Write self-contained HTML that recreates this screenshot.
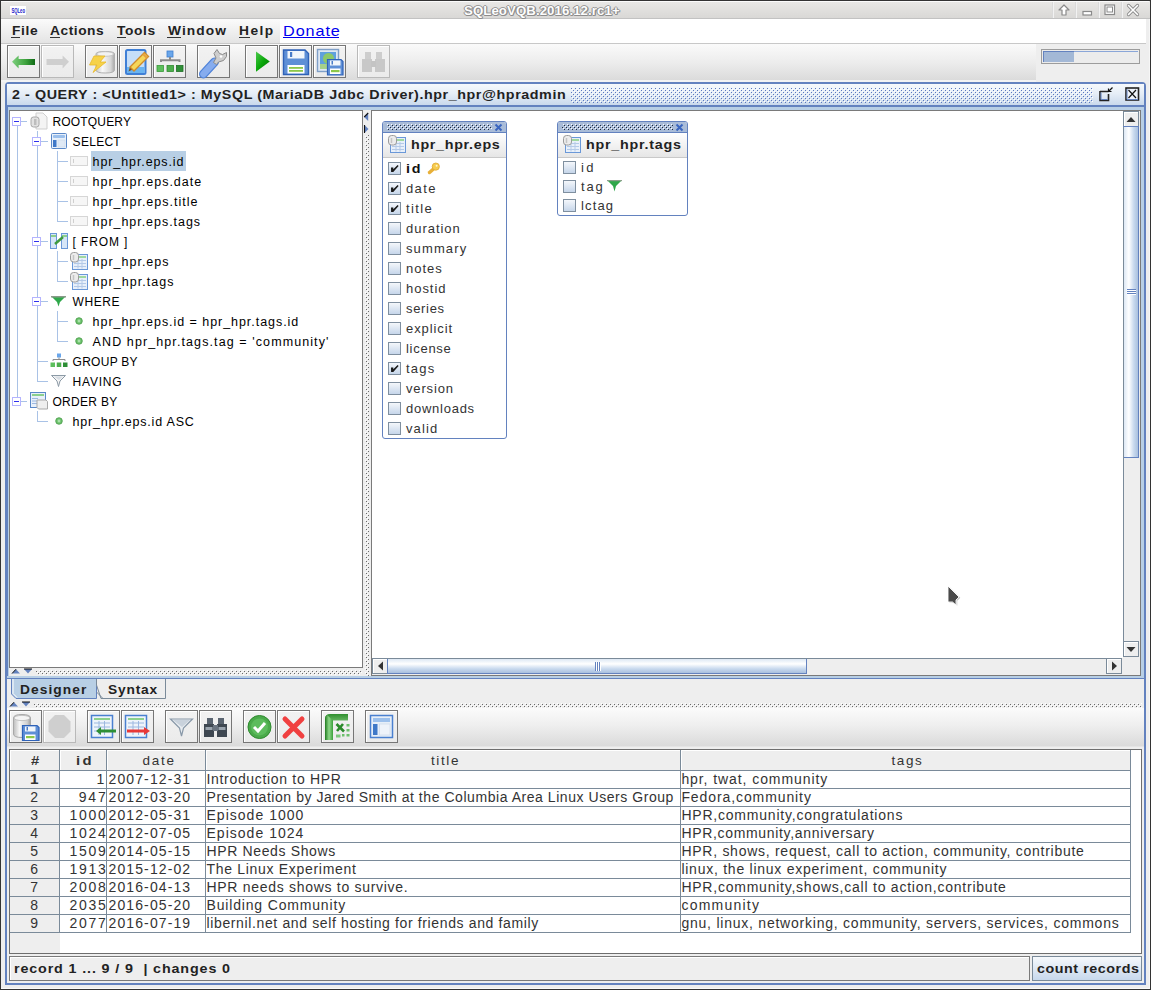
<!DOCTYPE html>
<html><head><meta charset="utf-8"><style>
html,body{margin:0;padding:0;}
body{width:1151px;height:990px;position:relative;overflow:hidden;background:#eeeeee;font-family:"Liberation Sans",sans-serif;}
.a{position:absolute;}
.t{position:absolute;white-space:pre;font-family:"Liberation Sans",sans-serif;}
svg{overflow:visible;}
</style></head><body>
<div class="a" style="left:0px;top:0px;width:1151px;height:990px;background:#eeeeee"></div>
<div class="a" style="left:0px;top:0px;width:1151px;height:19px;background:linear-gradient(#eae9e7,#d8d7d5);"></div>
<div class="a" style="left:1px;top:1px;width:1148px;height:1px;background:#fbfbfb"></div>
<div class="a" style="left:0px;top:18px;width:1151px;height:1px;background:#c2c2c2"></div>
<div class="a" style="left:10px;top:6px;width:16px;height:9px;background:#fff"></div>
<svg class="a" style="left:10px;top:6px" width="16" height="9" viewBox="0 0 16 9"><text x="1.5" y="7.3" font-family="Liberation Sans" font-size="7.5" font-weight="bold" fill="#1515c8" textLength="13.5" lengthAdjust="spacingAndGlyphs">SQLeo</text></svg>
<div class="t" style="left:463.5px;top:5px;font-size:12px;line-height:12px;letter-spacing:0.087px;color:#fdfdfd;transform:scaleX(1.100);transform-origin:0 0;font-weight:bold;text-shadow:1px 0 0 #8c8c8c,-1px 0 0 #8c8c8c,0 1px 0 #8c8c8c,0 -1px 0 #9c9c9c,1px 1px 0 #9a9a9a;">SQLeoVQB.2016.12.rc1+</div>
<div class="a" style="left:1052px;top:2px;width:1px;height:16px;background:#dadada"></div>
<div class="a" style="left:1053px;top:2px;width:1px;height:16px;background:#f2f2f2"></div>
<div class="a" style="left:1075px;top:2px;width:1px;height:16px;background:#dadada"></div>
<div class="a" style="left:1076px;top:2px;width:1px;height:16px;background:#f2f2f2"></div>
<div class="a" style="left:1098px;top:2px;width:1px;height:16px;background:#dadada"></div>
<div class="a" style="left:1099px;top:2px;width:1px;height:16px;background:#f2f2f2"></div>
<div class="a" style="left:1121px;top:2px;width:1px;height:16px;background:#dadada"></div>
<div class="a" style="left:1122px;top:2px;width:1px;height:16px;background:#f2f2f2"></div>
<svg class="a" style="left:1058px;top:4px" width="12" height="12" viewBox="0 0 12 12"><path d="M6 1 L11 6 L8 6 L8 11 L4 11 L4 6 L1 6 Z" fill="#fff" stroke="#8a8a8a" stroke-width="1.2" stroke-linejoin="round"/></svg>
<svg class="a" style="left:1082px;top:10px" width="11" height="7" viewBox="0 0 11 7"><rect x="1" y="1.5" width="8.5" height="3.5" fill="#fff" stroke="#8a8a8a" stroke-width="1.2"/></svg>
<svg class="a" style="left:1104px;top:4px" width="12" height="12" viewBox="0 0 12 12"><rect x="1" y="1" width="9.5" height="9.5" fill="#fff" stroke="#8a8a8a" stroke-width="1.2"/><rect x="3" y="3" width="5.5" height="5" fill="#fff" stroke="#8a8a8a" stroke-width="1"/></svg>
<svg class="a" style="left:1127px;top:4px" width="12" height="12" viewBox="0 0 12 12"><path d="M1.5 1.5 L10.5 10.5 M10.5 1.5 L1.5 10.5" stroke="#8a8a8a" stroke-width="3.2" stroke-linecap="round"/><path d="M1.5 1.5 L10.5 10.5 M10.5 1.5 L1.5 10.5" stroke="#fff" stroke-width="1.6" stroke-linecap="round"/></svg>
<div class="a" style="left:1px;top:19px;width:1149px;height:24px;background:#fff"></div>
<div class="a" style="left:1px;top:19px;width:279px;height:24px;background:linear-gradient(#fbfbfb,#e4e4e4)"></div>
<div class="a" style="left:1px;top:43px;width:1149px;height:1px;background:#c8c8c8"></div>
<div class="t" style="left:11.5px;top:25px;font-size:12.5px;line-height:12.5px;letter-spacing:0.561px;color:#222;transform:scaleX(1.100);transform-origin:0 0;font-weight:bold;">File</div>
<div class="a" style="left:11px;top:37px;width:9px;height:1px;background:#333"></div>
<div class="t" style="left:50.4px;top:25px;font-size:12.5px;line-height:12.5px;letter-spacing:0.491px;color:#222;transform:scaleX(1.100);transform-origin:0 0;font-weight:bold;">Actions</div>
<div class="a" style="left:50px;top:37px;width:10px;height:1px;background:#333"></div>
<div class="t" style="left:117.1px;top:25px;font-size:12.5px;line-height:12.5px;letter-spacing:0.565px;color:#222;transform:scaleX(1.100);transform-origin:0 0;font-weight:bold;">Tools</div>
<div class="a" style="left:117px;top:37px;width:9px;height:1px;background:#333"></div>
<div class="t" style="left:167.8px;top:25px;font-size:12.5px;line-height:12.5px;letter-spacing:0.970px;color:#222;transform:scaleX(1.100);transform-origin:0 0;font-weight:bold;">Window</div>
<div class="a" style="left:167px;top:37px;width:14px;height:1px;background:#333"></div>
<div class="t" style="left:239.0px;top:25px;font-size:12.5px;line-height:12.5px;letter-spacing:1.322px;color:#222;transform:scaleX(1.100);transform-origin:0 0;font-weight:bold;">Help</div>
<div class="a" style="left:239px;top:37px;width:11px;height:1px;background:#333"></div>
<div class="t" style="left:283.4px;top:23px;font-size:15px;line-height:15px;letter-spacing:0.859px;color:#0000ee;transform:scaleX(1.080);transform-origin:0 0;">Donate</div>
<div class="a" style="left:283px;top:37px;width:56px;height:1px;background:#0000ee"></div>
<div class="a" style="left:1px;top:44px;width:1149px;height:38px;background:linear-gradient(#fafafa 0%,#ececec 50%,#d9d9d9 100%)"></div>
<div class="a" style="left:1px;top:80px;width:1149px;height:2px;background:#f3f3f3"></div>
<div class="a" style="left:1036px;top:44px;width:113px;height:38px;background:#eeeeee"></div>
<div class="a" style="left:1041px;top:49px;width:99px;height:15px;border:1px solid #9c9c9c;box-sizing:border-box;background:#ececec"></div>
<div class="a" style="left:1043px;top:51px;width:31px;height:11px;background:#a3b8d6"></div>
<div class="a" style="left:1043px;top:51px;width:95px;height:1px;background:#8aa6d8"></div>
<div class="a" style="left:1043px;top:51px;width:1px;height:11px;background:#6382bf"></div>
<div class="a" style="left:1043px;top:51px;width:31px;height:1px;background:#6382bf"></div>
<div class="a" style="left:1146px;top:19px;width:4px;height:63px;background:#eeeeee"></div>
<div class="a" style="left:7px;top:45px;width:33px;height:33px;border:1px solid #767676;box-sizing:border-box;background:linear-gradient(#f2f2f2,#ebebeb);box-shadow:inset 1px 1px 0 #fff"></div>
<svg class="a" style="left:7px;top:45px" width="33" height="33" viewBox="0 0 33 33"><defs><linearGradient id="gback" x1="0" x2="1"><stop offset="0" stop-color="#7fd07f"/><stop offset="0.6" stop-color="#3da23d"/><stop offset="1" stop-color="#0f6a16"/></linearGradient></defs><path d="M5 16.8 L11.6 10.6 L11.6 14 L28 14 L28 20 L11.6 20 L11.6 23.5 Z" fill="url(#gback)"/></svg>
<div class="a" style="left:41px;top:45px;width:33px;height:33px;border:1px solid #b9b9b9;box-sizing:border-box;background:linear-gradient(#f2f2f2,#ebebeb);box-shadow:inset 1px 1px 0 #fff"></div>
<svg class="a" style="left:41px;top:45px" width="33" height="33" viewBox="0 0 33 33"><defs></defs><path d="M28 16.8 L21.6 10.6 L21.6 14 L5.5 14 L5.5 20 L21.6 20 L21.6 23.5 Z" fill="#cfcfcf"/></svg>
<div class="a" style="left:85px;top:45px;width:33px;height:33px;border:1px solid #767676;box-sizing:border-box;background:linear-gradient(#f2f2f2,#ebebeb);box-shadow:inset 1px 1px 0 #fff"></div>
<svg class="a" style="left:85px;top:45px" width="33" height="33" viewBox="0 0 33 33"><defs></defs><defs><linearGradient id="gcyl" x1="0" x2="1"><stop offset="0" stop-color="#c8c8c8"/><stop offset="0.35" stop-color="#f8f8f8"/><stop offset="0.8" stop-color="#d6d6d6"/><stop offset="1" stop-color="#a8a8a8"/></linearGradient></defs><path d="M11 9 Q11 6.5 20.2 6.5 Q29.5 6.5 29.5 9 L29.5 25 Q29.5 28 20.2 28 Q11 28 11 25 Z" fill="url(#gcyl)" stroke="#b0b0b0" stroke-width="1"/><ellipse cx="20.2" cy="9" rx="8.5" ry="2.3" fill="#f2f2f2" stroke="#bcbcbc" stroke-width="0.8"/><path d="M9 11 L20 11 L15 17 L21 17 L8 27.5 L12 20 L4.5 20 Z" fill="#f6d24a" stroke="#e9b92a" stroke-width="0.8"/></svg>
<div class="a" style="left:119px;top:45px;width:33px;height:33px;border:1px solid #767676;box-sizing:border-box;background:linear-gradient(#f2f2f2,#ebebeb);box-shadow:inset 1px 1px 0 #fff"></div>
<svg class="a" style="left:119px;top:45px" width="33" height="33" viewBox="0 0 33 33"><defs></defs><rect x="7" y="5" width="19.5" height="24" rx="1.5" fill="#c6def8" stroke="#3f7fd6" stroke-width="2"/><rect x="8" y="22" width="17.5" height="6" fill="#6ab4f0"/><path d="M9.5 26.5 L11 22 L13.5 24.5 Z" fill="#7a5020"/><path d="M11 22 L25.5 7.5 L29.5 11.5 L15 26 Z" fill="#f6d65a" stroke="#d08a2a" stroke-width="1.4"/><path d="M24 9 L28 13" stroke="#e8a040" stroke-width="2"/></svg>
<div class="a" style="left:153px;top:45px;width:33px;height:33px;border:1px solid #767676;box-sizing:border-box;background:linear-gradient(#f2f2f2,#ebebeb);box-shadow:inset 1px 1px 0 #fff"></div>
<svg class="a" style="left:153px;top:45px" width="33" height="33" viewBox="0 0 33 33"><defs></defs><rect x="14" y="6" width="6" height="6" fill="#6aa6ea" stroke="#3f7fd0" stroke-width="0.8"/><path d="M8 17 L8 15.2 L26.5 15.2 L26.5 17" fill="none" stroke="#8c8c8c" stroke-width="2"/><rect x="16" y="12" width="2" height="3" fill="#8c8c8c"/><rect x="4" y="20.5" width="6.5" height="6" fill="#5cbf5c" stroke="#3a9a3a" stroke-width="0.8"/><rect x="14" y="20.5" width="6.5" height="6" fill="#4cae4c" stroke="#2f8a2f" stroke-width="0.8"/><rect x="23.5" y="20.5" width="6.5" height="6" fill="#2e8f36" stroke="#1f6f26" stroke-width="0.8"/></svg>
<div class="a" style="left:197px;top:45px;width:33px;height:33px;border:1px solid #767676;box-sizing:border-box;background:linear-gradient(#f2f2f2,#ebebeb);box-shadow:inset 1px 1px 0 #fff"></div>
<svg class="a" style="left:197px;top:45px" width="33" height="33" viewBox="0 0 33 33"><defs></defs><path d="M6.5 29 L17.5 17" stroke="#4f82d8" stroke-width="9" stroke-linecap="round"/><path d="M6.5 29 L17.5 17" stroke="#86acee" stroke-width="6.5" stroke-linecap="round"/><path d="M16.5 17.5 L19 13 L17 8.5 L20 4.5 L22.5 8.5 L25.5 9.5 L29.5 7.5 L29.5 11.5 L26.5 15.5 L21.5 17 L19.5 19.5 Z" fill="#cdcdcd" stroke="#8a8a8a" stroke-width="1"/><circle cx="24" cy="11.5" r="1.3" fill="#fff"/></svg>
<div class="a" style="left:245px;top:45px;width:33px;height:33px;border:1px solid #767676;box-sizing:border-box;background:linear-gradient(#f2f2f2,#ebebeb);box-shadow:inset 1px 1px 0 #fff"></div>
<svg class="a" style="left:245px;top:45px" width="33" height="33" viewBox="0 0 33 33"><defs><linearGradient id="gplay" x1="0" y1="0" x2="1" y2="1"><stop offset="0" stop-color="#4cc84c"/><stop offset="0.5" stop-color="#0aa80a"/><stop offset="1" stop-color="#056e05"/></linearGradient></defs><path d="M11 6.4 L24.8 16.6 L11 26.8 Z" fill="url(#gplay)"/></svg>
<div class="a" style="left:279px;top:45px;width:33px;height:33px;border:1px solid #767676;box-sizing:border-box;background:linear-gradient(#f2f2f2,#ebebeb);box-shadow:inset 1px 1px 0 #fff"></div>
<svg class="a" style="left:279px;top:45px" width="33" height="33" viewBox="0 0 33 33"><defs></defs><path d="M4.5 5 L26 5 L29.5 8.5 L29.5 29.5 L4.5 29.5 Z" fill="#5e8fd6" stroke="#2f62b8" stroke-width="1.4"/><rect x="8.5" y="6" width="17" height="7.5" fill="#f2f6fb"/><rect x="11" y="7" width="2.2" height="5" fill="#4a7cc8"/><rect x="8.5" y="20" width="17" height="8.5" fill="#fff"/><rect x="10" y="22" width="14" height="1.8" fill="#8cc84a"/><rect x="10" y="25" width="14" height="1.8" fill="#8cc84a"/></svg>
<div class="a" style="left:313px;top:45px;width:33px;height:33px;border:1px solid #767676;box-sizing:border-box;background:linear-gradient(#f2f2f2,#ebebeb);box-shadow:inset 1px 1px 0 #fff"></div>
<svg class="a" style="left:313px;top:45px" width="33" height="33" viewBox="0 0 33 33"><defs></defs><rect x="4.5" y="4.5" width="21" height="22" fill="#dfe8f3" stroke="#7f9fc8" stroke-width="1.4"/><rect x="7" y="7" width="16" height="17" fill="#5fa0de"/><circle cx="15.5" cy="13.5" r="5.5" fill="#8cc86a"/><rect x="7" y="19" width="16" height="5" fill="#a6d08a"/><path d="M14.5 14.5 L28 14.5 L30 16.5 L30 30 L14.5 30 Z" fill="#5e8fd6" stroke="#2f62b8" stroke-width="1.2"/><rect x="17" y="15.5" width="10.5" height="5" fill="#f2f6fb"/><rect x="18.5" y="16" width="1.5" height="3.5" fill="#4a7cc8"/><rect x="17" y="23.5" width="10.5" height="5.5" fill="#fff"/><rect x="18" y="25" width="8.5" height="2.2" fill="#8cc84a"/></svg>
<div class="a" style="left:357px;top:45px;width:33px;height:33px;border:1px solid #b9b9b9;box-sizing:border-box;background:linear-gradient(#f2f2f2,#ebebeb);box-shadow:inset 1px 1px 0 #fff"></div>
<svg class="a" style="left:357px;top:45px" width="33" height="33" viewBox="0 0 33 33"><defs></defs><rect x="8" y="7" width="6" height="8" fill="#cdcdcd"/><rect x="19" y="7" width="6" height="8" fill="#cdcdcd"/><rect x="5" y="14" width="10" height="13" fill="#c8c8c8"/><rect x="18" y="14" width="10" height="13" fill="#c8c8c8"/><rect x="14" y="16" width="5" height="6" fill="#c4c4c4"/></svg>
<div class="a" style="left:5px;top:82px;width:1141px;height:903px;border:2px solid #6382bf;border-radius:4px 4px 0 0;box-sizing:border-box;background:#eeeeee"></div>
<div class="a" style="left:7px;top:84px;width:1137px;height:21px;background:linear-gradient(#f6f9fc 0%,#e6eef7 45%,#c9d9ec 100%)"></div>
<div class="a" style="left:7px;top:105px;width:1137px;height:2px;background:#6382bf"></div>
<div class="t" style="left:11.8px;top:88px;font-size:13px;line-height:13px;letter-spacing:0.519px;color:#222;transform:scaleX(1.100);transform-origin:0 0;font-weight:bold;">2 - QUERY : &lt;Untitled1&gt; : MySQL (MariaDB Jdbc Driver).hpr_hpr@hpradmin</div>
<svg class="a" style="left:0;top:0" width="1151" height="990"><defs><pattern id="bp1" width="4" height="4" patternUnits="userSpaceOnUse"><rect x="3" y="0" width="1" height="1" fill="#5a78c0"/><rect x="1" y="2" width="1" height="1" fill="#5a78c0"/><rect x="0" y="1" width="1" height="1" fill="#ffffff"/><rect x="2" y="3" width="1" height="1" fill="#ffffff"/></pattern></defs><rect x="571" y="88" width="522" height="15" fill="url(#bp1)"/></svg>
<svg class="a" style="left:1094px;top:84px" width="50" height="20" viewBox="0 0 50 20"><path d="M6 7.5 L14.5 7.5 M6 7 L6 16.5 L14.5 16.5 L14.5 10" fill="none" stroke="#222" stroke-width="1.6"/><path d="M7 8.5 L7 15.5 L13.5 15.5" fill="none" stroke="#6382bf" stroke-width="1"/><path d="M18.5 3.5 L14.5 7.5 M14.5 4.5 L14.5 7.5 L17.5 7.5" fill="none" stroke="#111" stroke-width="1.2"/><rect x="32" y="4" width="12.5" height="12" fill="#eef3fa" stroke="#222" stroke-width="1.6"/><path d="M33 15.5 L33 5 M33 15.5 L44 15.5" stroke="#6382bf" stroke-width="1"/><path d="M34.5 6 L42 14 M42 6 L34.5 14" stroke="#111" stroke-width="1.2"/></svg>
<div class="a" style="left:7px;top:107px;width:1137px;height:3px;background:#b8cfe5"></div>
<div class="a" style="left:7px;top:107px;width:2px;height:571px;background:#b8cfe5"></div>
<div class="a" style="left:7px;top:107px;width:1px;height:572px;background:#6382bf"></div>
<div class="a" style="left:1141px;top:107px;width:3px;height:571px;background:#b8cfe5"></div>
<div class="a" style="left:7px;top:676px;width:1137px;height:2px;background:#b8cfe5"></div>
<div class="a" style="left:7px;top:678px;width:1137px;height:1px;background:#6382bf"></div>
<div class="a" style="left:9px;top:110px;width:1132px;height:566px;background:#eeeeee"></div>
<div class="a" style="left:9px;top:110px;width:354px;height:558px;border:1px solid #7a7a7a;box-sizing:border-box;background:#fff"></div>
<div class="a" style="left:371px;top:110px;width:770px;height:566px;border:1px solid #7a7a7a;box-sizing:border-box;background:#fff"></div>
<svg class="a" style="left:0;top:0" width="1151" height="990"><defs><pattern id="bp2" width="4" height="4" patternUnits="userSpaceOnUse"><rect x="2" y="1" width="1" height="1" fill="#6a6a6a"/><rect x="0" y="3" width="1" height="1" fill="#6a6a6a"/><rect x="3" y="2" width="1" height="1" fill="#ffffff"/><rect x="1" y="0" width="1" height="1" fill="#ffffff"/></pattern></defs><rect x="365" y="135" width="4" height="541" fill="url(#bp2)"/></svg>
<svg class="a" style="left:0;top:0" width="1151" height="990"><defs><pattern id="bp3" width="4" height="4" patternUnits="userSpaceOnUse"><rect x="0" y="3" width="1" height="1" fill="#6a6a6a"/><rect x="2" y="1" width="1" height="1" fill="#6a6a6a"/><rect x="1" y="0" width="1" height="1" fill="#ffffff"/><rect x="3" y="2" width="1" height="1" fill="#ffffff"/></pattern></defs><rect x="36" y="670" width="326" height="5" fill="url(#bp3)"/></svg>
<div class="a" style="left:17px;top:126px;width:1px;height:271px;background:#a9c2e6"></div>
<div class="a" style="left:37px;top:131px;width:1px;height:251px;background:#a9c2e6"></div>
<div class="a" style="left:57px;top:151px;width:1px;height:71px;background:#a9c2e6"></div>
<div class="a" style="left:57px;top:251px;width:1px;height:31px;background:#a9c2e6"></div>
<div class="a" style="left:57px;top:311px;width:1px;height:31px;background:#a9c2e6"></div>
<div class="a" style="left:37px;top:411px;width:1px;height:11px;background:#a9c2e6"></div>
<div class="a" style="left:21px;top:121px;width:6px;height:1px;background:#a9c2e6"></div>
<div class="a" style="left:21px;top:401px;width:6px;height:1px;background:#a9c2e6"></div>
<div class="a" style="left:41px;top:141px;width:7px;height:1px;background:#a9c2e6"></div>
<div class="a" style="left:41px;top:241px;width:7px;height:1px;background:#a9c2e6"></div>
<div class="a" style="left:41px;top:301px;width:7px;height:1px;background:#a9c2e6"></div>
<div class="a" style="left:37px;top:361px;width:11px;height:1px;background:#a9c2e6"></div>
<div class="a" style="left:37px;top:381px;width:11px;height:1px;background:#a9c2e6"></div>
<div class="a" style="left:37px;top:421px;width:11px;height:1px;background:#a9c2e6"></div>
<div class="a" style="left:57px;top:161px;width:11px;height:1px;background:#a9c2e6"></div>
<div class="a" style="left:57px;top:181px;width:11px;height:1px;background:#a9c2e6"></div>
<div class="a" style="left:57px;top:201px;width:11px;height:1px;background:#a9c2e6"></div>
<div class="a" style="left:57px;top:221px;width:11px;height:1px;background:#a9c2e6"></div>
<div class="a" style="left:57px;top:261px;width:11px;height:1px;background:#a9c2e6"></div>
<div class="a" style="left:57px;top:281px;width:11px;height:1px;background:#a9c2e6"></div>
<div class="a" style="left:57px;top:321px;width:11px;height:1px;background:#a9c2e6"></div>
<div class="a" style="left:57px;top:341px;width:11px;height:1px;background:#a9c2e6"></div>
<div class="a" style="left:12px;top:117px;width:9px;height:9px;border:1px solid #b4b4ff;box-sizing:border-box;background:#fff"></div>
<div class="a" style="left:14px;top:121px;width:5px;height:1px;background:#3030f0"></div>
<div class="a" style="left:12px;top:397px;width:9px;height:9px;border:1px solid #b4b4ff;box-sizing:border-box;background:#fff"></div>
<div class="a" style="left:14px;top:401px;width:5px;height:1px;background:#3030f0"></div>
<div class="a" style="left:32px;top:137px;width:9px;height:9px;border:1px solid #b4b4ff;box-sizing:border-box;background:#fff"></div>
<div class="a" style="left:34px;top:141px;width:5px;height:1px;background:#3030f0"></div>
<div class="a" style="left:32px;top:237px;width:9px;height:9px;border:1px solid #b4b4ff;box-sizing:border-box;background:#fff"></div>
<div class="a" style="left:34px;top:241px;width:5px;height:1px;background:#3030f0"></div>
<div class="a" style="left:32px;top:297px;width:9px;height:9px;border:1px solid #b4b4ff;box-sizing:border-box;background:#fff"></div>
<div class="a" style="left:34px;top:301px;width:5px;height:1px;background:#3030f0"></div>
<svg class="a" style="left:30px;top:112px" width="18" height="18" viewBox="0 0 18 18"><path d="M6 1 L13 1 L17 5 L17 17 L6 17 Z" fill="#f4f4f4" stroke="#cfcfcf" stroke-width="1"/><rect x="1" y="5" width="8" height="10" rx="2.5" fill="#e2e2e2" stroke="#a8a8a8" stroke-width="1"/><rect x="4" y="7" width="2.5" height="6" fill="#bdbdbd"/></svg>
<svg class="a" style="left:51px;top:133px" width="16" height="16" viewBox="0 0 16 16"><rect x="0.5" y="0.5" width="15" height="15" rx="1" fill="#e8f0fa" stroke="#5a88c8" stroke-width="1"/><rect x="2" y="2" width="12" height="3" rx="1" fill="#9cc0ec"/><rect x="2" y="7" width="3.5" height="7" fill="#3f78c8"/><rect x="7" y="7" width="7" height="7" fill="#dfe9f5" stroke="#c8d6e8" stroke-width="0.5"/></svg>
<svg class="a" style="left:70px;top:156px" width="18" height="10" viewBox="0 0 18 10"><rect x="0.5" y="0.5" width="17" height="9" fill="#f6f6f6" stroke="#d6d6d6" stroke-width="1"/><rect x="3" y="3" width="1" height="4" fill="#cfcfcf"/></svg>
<svg class="a" style="left:70px;top:176px" width="18" height="10" viewBox="0 0 18 10"><rect x="0.5" y="0.5" width="17" height="9" fill="#f6f6f6" stroke="#d6d6d6" stroke-width="1"/><rect x="3" y="3" width="1" height="4" fill="#cfcfcf"/></svg>
<svg class="a" style="left:70px;top:196px" width="18" height="10" viewBox="0 0 18 10"><rect x="0.5" y="0.5" width="17" height="9" fill="#f6f6f6" stroke="#d6d6d6" stroke-width="1"/><rect x="3" y="3" width="1" height="4" fill="#cfcfcf"/></svg>
<svg class="a" style="left:70px;top:216px" width="18" height="10" viewBox="0 0 18 10"><rect x="0.5" y="0.5" width="17" height="9" fill="#f6f6f6" stroke="#d6d6d6" stroke-width="1"/><rect x="3" y="3" width="1" height="4" fill="#cfcfcf"/></svg>
<div class="a" style="left:91px;top:151px;width:95px;height:20px;background:#b8cfe5"></div>
<svg class="a" style="left:50px;top:233px" width="18" height="16" viewBox="0 0 18 16"><rect x="0.5" y="0.5" width="6" height="15" fill="#d6e6f8" stroke="#6a98d8" stroke-width="1"/><rect x="1" y="2" width="5" height="2" fill="#8cd08c"/><rect x="11.5" y="0.5" width="6" height="15" fill="#d6e6f8" stroke="#6a98d8" stroke-width="1"/><rect x="12" y="2" width="5" height="2" fill="#8cd08c"/><path d="M5 11 L13 4" stroke="#3f9a3f" stroke-width="2.5"/></svg>
<svg class="a" style="left:70px;top:252px" width="18" height="18" viewBox="0 0 18 18"><rect x="2.5" y="2.5" width="15" height="15" fill="#e8f0fa" stroke="#6a98d8" stroke-width="1"/><rect x="4" y="4" width="12" height="2" fill="#9fd89f"/><path d="M4 8.5 H16 M4 11.5 H16 M4 14.5 H16 M8 7 V16.5 M12 7 V16.5" stroke="#b4cae8" stroke-width="1"/><rect x="0.5" y="0.5" width="8" height="9.5" rx="3" fill="#ececec" stroke="#9a9a9a" stroke-width="1"/><path d="M3.5 3 V8" stroke="#c4c4c4" stroke-width="1.5"/></svg>
<svg class="a" style="left:70px;top:272px" width="18" height="18" viewBox="0 0 18 18"><rect x="2.5" y="2.5" width="15" height="15" fill="#e8f0fa" stroke="#6a98d8" stroke-width="1"/><rect x="4" y="4" width="12" height="2" fill="#9fd89f"/><path d="M4 8.5 H16 M4 11.5 H16 M4 14.5 H16 M8 7 V16.5 M12 7 V16.5" stroke="#b4cae8" stroke-width="1"/><rect x="0.5" y="0.5" width="8" height="9.5" rx="3" fill="#ececec" stroke="#9a9a9a" stroke-width="1"/><path d="M3.5 3 V8" stroke="#c4c4c4" stroke-width="1.5"/></svg>
<svg class="a" style="left:51px;top:296px" width="15" height="11" viewBox="0 0 15 11"><path d="M0.5 0.5 L14.5 0.5 L9 6 L7.5 10.5 L6 6 Z" fill="#2fa84a"/><rect x="0" y="0" width="15" height="1.5" fill="#8a9a8a"/></svg>
<svg class="a" style="left:75px;top:317px" width="8" height="8" viewBox="0 0 8 8"><circle cx="4" cy="4" r="3.3" fill="#6cc26c" stroke="#4a9a4a" stroke-width="0.8"/><circle cx="4" cy="4" r="1.4" fill="#a8e0a8"/></svg>
<svg class="a" style="left:75px;top:337px" width="8" height="8" viewBox="0 0 8 8"><circle cx="4" cy="4" r="3.3" fill="#6cc26c" stroke="#4a9a4a" stroke-width="0.8"/><circle cx="4" cy="4" r="1.4" fill="#a8e0a8"/></svg>
<svg class="a" style="left:55px;top:417px" width="8" height="8" viewBox="0 0 8 8"><circle cx="4" cy="4" r="3.3" fill="#6cc26c" stroke="#4a9a4a" stroke-width="0.8"/><circle cx="4" cy="4" r="1.4" fill="#a8e0a8"/></svg>
<svg class="a" style="left:50px;top:353px" width="18" height="15" viewBox="0 0 18 15"><rect x="7" y="0.5" width="4" height="4" fill="#6aa6ea"/><path d="M3 8 V6.5 H15 V8" fill="none" stroke="#8c8c8c" stroke-width="1"/><rect x="8.5" y="4.5" width="1" height="2" fill="#8c8c8c"/><rect x="0.5" y="9.5" width="4.5" height="4.5" fill="#5cbf5c"/><rect x="6.75" y="9.5" width="4.5" height="4.5" fill="#4cae4c"/><rect x="13" y="9.5" width="4.5" height="4.5" fill="#2e8f36"/></svg>
<svg class="a" style="left:51px;top:375px" width="15" height="12" viewBox="0 0 15 12"><path d="M0.5 0.5 L14.5 0.5 L9 6 L7.5 11.5 L6 6 Z" fill="#f4f4f4" stroke="#8c9aa6" stroke-width="1"/><path d="M3 1.5 L12 1.5 L8 5 Z" fill="#d8dee4"/></svg>
<svg class="a" style="left:30px;top:392px" width="18" height="18" viewBox="0 0 18 18"><rect x="0.5" y="0.5" width="15" height="15" fill="#e8f0fa" stroke="#5a88c8" stroke-width="1"/><rect x="2" y="2" width="12" height="2" fill="#8cd08c"/><path d="M2 6.5 H8 M2 9 H8 M2 11.5 H8" stroke="#9cb8e0" stroke-width="1"/><path d="M7 8 L16 8 L17.5 9.5 L17.5 17 L8.5 17 L7 15.5 Z" fill="#eeeeee" stroke="#a8a8a8" stroke-width="1"/></svg>
<div class="t" style="left:52.4px;top:116px;font-size:12px;line-height:12px;letter-spacing:0.180px;color:#000;">ROOTQUERY</div>
<div class="t" style="left:72.6px;top:136px;font-size:12px;line-height:12px;letter-spacing:0.284px;color:#000;">SELECT</div>
<div class="t" style="left:92.6px;top:156px;font-size:12.5px;line-height:12.5px;letter-spacing:0.896px;color:#000;">hpr_hpr.eps.id</div>
<div class="t" style="left:92.6px;top:176px;font-size:12.5px;line-height:12.5px;letter-spacing:0.982px;color:#000;">hpr_hpr.eps.date</div>
<div class="t" style="left:92.6px;top:196px;font-size:12.5px;line-height:12.5px;letter-spacing:0.988px;color:#000;">hpr_hpr.eps.title</div>
<div class="t" style="left:92.6px;top:216px;font-size:12.5px;line-height:12.5px;letter-spacing:0.957px;color:#000;">hpr_hpr.eps.tags</div>
<div class="t" style="left:72.6px;top:236px;font-size:12px;line-height:12px;letter-spacing:0.875px;color:#000;">[ FROM ]</div>
<div class="t" style="left:92.6px;top:256px;font-size:12.5px;line-height:12.5px;letter-spacing:0.988px;color:#000;">hpr_hpr.eps</div>
<div class="t" style="left:92.6px;top:276px;font-size:12.5px;line-height:12.5px;letter-spacing:1.032px;color:#000;">hpr_hpr.tags</div>
<div class="t" style="left:72.6px;top:296px;font-size:12px;line-height:12px;letter-spacing:0.573px;color:#000;">WHERE</div>
<div class="t" style="left:92.6px;top:316px;font-size:12.5px;line-height:12.5px;letter-spacing:0.951px;color:#000;">hpr_hpr.eps.id = hpr_hpr.tags.id</div>
<div class="t" style="left:92.6px;top:336px;font-size:12.5px;line-height:12.5px;letter-spacing:1.096px;color:#000;">AND hpr_hpr.tags.tag = 'community'</div>
<div class="t" style="left:72.6px;top:356px;font-size:12px;line-height:12px;letter-spacing:0.265px;color:#000;">GROUP BY</div>
<div class="t" style="left:72.6px;top:376px;font-size:12px;line-height:12px;letter-spacing:0.783px;color:#000;">HAVING</div>
<div class="t" style="left:52.4px;top:396px;font-size:12px;line-height:12px;letter-spacing:0.316px;color:#000;">ORDER BY</div>
<div class="t" style="left:72.6px;top:416px;font-size:12.5px;line-height:12.5px;letter-spacing:0.794px;color:#000;">hpr_hpr.eps.id ASC</div>
<svg class="a" style="left:363px;top:112px" width="7" height="22" viewBox="0 0 7 22"><path d="M5.2 1 L1.2 5 L5.2 9 Z" fill="#6382bf"/><path d="M5.2 1 L1.2 5" stroke="#111" stroke-width="1.1"/><path d="M1.5 13 L5.5 17 L1.5 21 Z" fill="#6382bf"/><path d="M1.5 13 L1.5 21" stroke="#111" stroke-width="1.1"/></svg>
<svg class="a" style="left:11px;top:668px" width="24" height="7" viewBox="0 0 24 7"><path d="M1 5.5 L5 1.2 L9 5.5 Z" fill="#6382bf"/><path d="M1 5.5 L5 1.2" stroke="#111" stroke-width="1"/><path d="M13 1 L21 1 L17 5.5 Z" fill="#6382bf"/><path d="M13 1 L21 1" stroke="#111" stroke-width="1"/></svg>
<svg class="a" style="left:9px;top:701px" width="24" height="7" viewBox="0 0 24 7"><path d="M1 5.5 L5 1.2 L9 5.5 Z" fill="#6382bf"/><path d="M1 5.5 L5 1.2" stroke="#111" stroke-width="1"/><path d="M13 1 L21 1 L17 5.5 Z" fill="#6382bf"/><path d="M13 1 L21 1" stroke="#111" stroke-width="1"/></svg>
<div class="a" style="left:1123px;top:111px;width:17px;height:564px;background:#eeeeee"></div>
<div class="a" style="left:372px;top:658px;width:751px;height:17px;background:#eeeeee"></div>
<div class="a" style="left:1123px;top:111px;width:16px;height:16px;background:#eeeeee;border:1px solid #7a8a99;box-sizing:border-box;box-shadow:inset 1px 1px 0 #fff"></div>
<svg class="a" style="left:1123px;top:111px" width="16" height="16" viewBox="0 0 16 16"><path d="M3.5 11 L8 6 L12.5 11 Z" fill="#333"/></svg>
<div class="a" style="left:1123px;top:641px;width:16px;height:16px;background:#eeeeee;border:1px solid #7a8a99;box-sizing:border-box;box-shadow:inset 1px 1px 0 #fff"></div>
<svg class="a" style="left:1123px;top:641px" width="16" height="16" viewBox="0 0 16 16"><path d="M3.5 6 L8 11 L12.5 6 Z" fill="#333"/></svg>
<div class="a" style="left:1123px;top:126px;width:16px;height:332px;border:1px solid #6382bf;box-sizing:border-box;background:linear-gradient(90deg,#dde8f4,#ffffff 35%,#c8d9ee 70%,#a9c0de)"></div>
<div class="a" style="left:1127px;top:289px;width:9px;height:1px;background:#6382bf"></div>
<div class="a" style="left:1127px;top:290px;width:9px;height:1px;background:#fff"></div>
<div class="a" style="left:1127px;top:291px;width:9px;height:1px;background:#6382bf"></div>
<div class="a" style="left:1127px;top:292px;width:9px;height:1px;background:#fff"></div>
<div class="a" style="left:1127px;top:293px;width:9px;height:1px;background:#6382bf"></div>
<div class="a" style="left:1127px;top:294px;width:9px;height:1px;background:#fff"></div>
<div class="a" style="left:1123px;top:127px;width:1px;height:529px;background:#7a8a99"></div>
<div class="a" style="left:372px;top:658px;width:16px;height:16px;background:#eeeeee;border:1px solid #7a8a99;box-sizing:border-box;box-shadow:inset 1px 1px 0 #fff"></div>
<svg class="a" style="left:372px;top:658px" width="16" height="16" viewBox="0 0 16 16"><path d="M11 3.5 L6 8 L11 12.5 Z" fill="#333"/></svg>
<div class="a" style="left:1106px;top:658px;width:16px;height:16px;background:#eeeeee;border:1px solid #7a8a99;box-sizing:border-box;box-shadow:inset 1px 1px 0 #fff"></div>
<svg class="a" style="left:1106px;top:658px" width="16" height="16" viewBox="0 0 16 16"><path d="M6 3.5 L11 8 L6 12.5 Z" fill="#333"/></svg>
<div class="a" style="left:387px;top:658px;width:420px;height:16px;border:1px solid #6382bf;box-sizing:border-box;background:linear-gradient(#dde8f4,#ffffff 35%,#c8d9ee 70%,#a9c0de)"></div>
<div class="a" style="left:595px;top:662px;width:1px;height:9px;background:#6382bf"></div>
<div class="a" style="left:596px;top:662px;width:1px;height:9px;background:#fff"></div>
<div class="a" style="left:597px;top:662px;width:1px;height:9px;background:#6382bf"></div>
<div class="a" style="left:598px;top:662px;width:1px;height:9px;background:#fff"></div>
<div class="a" style="left:599px;top:662px;width:1px;height:9px;background:#6382bf"></div>
<div class="a" style="left:600px;top:662px;width:1px;height:9px;background:#fff"></div>
<div class="a" style="left:372px;top:658px;width:734px;height:1px;background:#7a8a99"></div>
<div class="a" style="left:382px;top:121px;width:125px;height:318px;border:1px solid #6382bf;border-radius:3px;box-sizing:border-box;background:#fff"></div>
<div class="a" style="left:383px;top:122px;width:123px;height:11px;background:#a9bcd8;border-radius:2px 2px 0 0"></div>
<svg class="a" style="left:0;top:0" width="1151" height="990"><defs><pattern id="bp4" width="4" height="4" patternUnits="userSpaceOnUse"><rect x="0" y="1" width="1" height="1" fill="#1e2a3a"/><rect x="2" y="3" width="1" height="1" fill="#1e2a3a"/><rect x="3" y="0" width="1" height="1" fill="#ffffff"/><rect x="1" y="2" width="1" height="1" fill="#ffffff"/></pattern></defs><rect x="387" y="124" width="105" height="6" fill="url(#bp4)"/></svg>
<svg class="a" style="left:494px;top:123px" width="9" height="9" viewBox="0 0 9 9"><path d="M1.5 1.5 L7.5 7.5 M7.5 1.5 L1.5 7.5" stroke="#3a66c0" stroke-width="2"/></svg>
<div class="a" style="left:383px;top:132px;width:123px;height:1px;background:#6382bf"></div>
<div class="a" style="left:383px;top:133px;width:123px;height:24px;background:linear-gradient(#ffffff,#e6e6e6)"></div>
<div class="a" style="left:383px;top:157px;width:123px;height:1px;background:#c9c9c9"></div>
<svg class="a" style="left:388px;top:135px" width="18" height="18" viewBox="0 0 18 18"><rect x="2.5" y="2.5" width="15" height="15" fill="#e8f0fa" stroke="#6a98d8" stroke-width="1"/><rect x="4" y="4" width="12" height="2" fill="#9fd89f"/><path d="M4 8.5 H16 M4 11.5 H16 M4 14.5 H16 M8 7 V16.5 M12 7 V16.5" stroke="#b4cae8" stroke-width="1"/><rect x="0.5" y="0.5" width="8" height="9.5" rx="3" fill="#ececec" stroke="#9a9a9a" stroke-width="1"/><path d="M3.5 3 V8" stroke="#c4c4c4" stroke-width="1.5"/></svg>
<div class="t" style="left:411.0px;top:138px;font-size:13px;line-height:13px;letter-spacing:0.628px;color:#222;transform:scaleX(1.100);transform-origin:0 0;font-weight:bold;">hpr_hpr.eps</div>
<div class="a" style="left:388px;top:162px;width:13px;height:13px;border:1px solid #7f8f9f;box-sizing:border-box;background:linear-gradient(#f4f7fb,#c6d6ea)"></div>
<svg class="a" style="left:388px;top:162px" width="13" height="13" viewBox="0 0 13 13"><path d="M3 5.5 L5.3 5.5 L5.3 7.3 L9.6 2.9 L10.6 3.9 L5.3 9.9 L3.1 9.9 Z" fill="#1a1a1a"/></svg>
<div class="t" style="left:406.0px;top:162px;font-size:13px;line-height:13px;letter-spacing:1.547px;color:#111;transform:scaleX(1.100);transform-origin:0 0;font-weight:bold;">id</div>
<svg class="a" style="left:426px;top:162px" width="14" height="12" viewBox="0 0 14 12"><path d="M8 6.5 L3.5 10.5" stroke="#e8b038" stroke-width="3.4" stroke-linecap="round"/><circle cx="9.8" cy="4.6" r="3.6" fill="#f6cc50" stroke="#e0a830" stroke-width="0.8"/><circle cx="10.6" cy="3.8" r="1" fill="#fff6d0"/></svg>
<div class="a" style="left:388px;top:182px;width:13px;height:13px;border:1px solid #7f8f9f;box-sizing:border-box;background:linear-gradient(#f4f7fb,#c6d6ea)"></div>
<svg class="a" style="left:388px;top:182px" width="13" height="13" viewBox="0 0 13 13"><path d="M3 5.5 L5.3 5.5 L5.3 7.3 L9.6 2.9 L10.6 3.9 L5.3 9.9 L3.1 9.9 Z" fill="#1a1a1a"/></svg>
<div class="t" style="left:406.0px;top:182px;font-size:13px;line-height:13px;letter-spacing:1.352px;color:#333;">date</div>
<div class="a" style="left:388px;top:202px;width:13px;height:13px;border:1px solid #7f8f9f;box-sizing:border-box;background:linear-gradient(#f4f7fb,#c6d6ea)"></div>
<svg class="a" style="left:388px;top:202px" width="13" height="13" viewBox="0 0 13 13"><path d="M3 5.5 L5.3 5.5 L5.3 7.3 L9.6 2.9 L10.6 3.9 L5.3 9.9 L3.1 9.9 Z" fill="#1a1a1a"/></svg>
<div class="t" style="left:406.0px;top:202px;font-size:13px;line-height:13px;letter-spacing:1.345px;color:#333;">title</div>
<div class="a" style="left:388px;top:222px;width:13px;height:13px;border:1px solid #7f8f9f;box-sizing:border-box;background:linear-gradient(#f4f7fb,#c6d6ea)"></div>
<div class="t" style="left:406.0px;top:222px;font-size:13px;line-height:13px;letter-spacing:0.973px;color:#333;">duration</div>
<div class="a" style="left:388px;top:242px;width:13px;height:13px;border:1px solid #7f8f9f;box-sizing:border-box;background:linear-gradient(#f4f7fb,#c6d6ea)"></div>
<div class="t" style="left:406.0px;top:242px;font-size:13px;line-height:13px;letter-spacing:1.113px;color:#333;">summary</div>
<div class="a" style="left:388px;top:262px;width:13px;height:13px;border:1px solid #7f8f9f;box-sizing:border-box;background:linear-gradient(#f4f7fb,#c6d6ea)"></div>
<div class="t" style="left:406.0px;top:262px;font-size:13px;line-height:13px;letter-spacing:0.980px;color:#333;">notes</div>
<div class="a" style="left:388px;top:282px;width:13px;height:13px;border:1px solid #7f8f9f;box-sizing:border-box;background:linear-gradient(#f4f7fb,#c6d6ea)"></div>
<div class="t" style="left:406.0px;top:282px;font-size:13px;line-height:13px;letter-spacing:0.961px;color:#333;">hostid</div>
<div class="a" style="left:388px;top:302px;width:13px;height:13px;border:1px solid #7f8f9f;box-sizing:border-box;background:linear-gradient(#f4f7fb,#c6d6ea)"></div>
<div class="t" style="left:406.0px;top:302px;font-size:13px;line-height:13px;letter-spacing:0.686px;color:#333;">series</div>
<div class="a" style="left:388px;top:322px;width:13px;height:13px;border:1px solid #7f8f9f;box-sizing:border-box;background:linear-gradient(#f4f7fb,#c6d6ea)"></div>
<div class="t" style="left:406.0px;top:322px;font-size:13px;line-height:13px;letter-spacing:0.907px;color:#333;">explicit</div>
<div class="a" style="left:388px;top:342px;width:13px;height:13px;border:1px solid #7f8f9f;box-sizing:border-box;background:linear-gradient(#f4f7fb,#c6d6ea)"></div>
<div class="t" style="left:406.0px;top:342px;font-size:13px;line-height:13px;letter-spacing:0.721px;color:#333;">license</div>
<div class="a" style="left:388px;top:362px;width:13px;height:13px;border:1px solid #7f8f9f;box-sizing:border-box;background:linear-gradient(#f4f7fb,#c6d6ea)"></div>
<svg class="a" style="left:388px;top:362px" width="13" height="13" viewBox="0 0 13 13"><path d="M3 5.5 L5.3 5.5 L5.3 7.3 L9.6 2.9 L10.6 3.9 L5.3 9.9 L3.1 9.9 Z" fill="#1a1a1a"/></svg>
<div class="t" style="left:406.0px;top:362px;font-size:13px;line-height:13px;letter-spacing:1.196px;color:#333;">tags</div>
<div class="a" style="left:388px;top:382px;width:13px;height:13px;border:1px solid #7f8f9f;box-sizing:border-box;background:linear-gradient(#f4f7fb,#c6d6ea)"></div>
<div class="t" style="left:406.0px;top:382px;font-size:13px;line-height:13px;letter-spacing:0.836px;color:#333;">version</div>
<div class="a" style="left:388px;top:402px;width:13px;height:13px;border:1px solid #7f8f9f;box-sizing:border-box;background:linear-gradient(#f4f7fb,#c6d6ea)"></div>
<div class="t" style="left:406.0px;top:402px;font-size:13px;line-height:13px;letter-spacing:0.744px;color:#333;">downloads</div>
<div class="a" style="left:388px;top:422px;width:13px;height:13px;border:1px solid #7f8f9f;box-sizing:border-box;background:linear-gradient(#f4f7fb,#c6d6ea)"></div>
<div class="t" style="left:406.0px;top:422px;font-size:13px;line-height:13px;letter-spacing:1.093px;color:#333;">valid</div>
<div class="a" style="left:557px;top:121px;width:131px;height:95px;border:1px solid #6382bf;border-radius:3px;box-sizing:border-box;background:#fff"></div>
<div class="a" style="left:558px;top:122px;width:129px;height:11px;background:#a9bcd8;border-radius:2px 2px 0 0"></div>
<svg class="a" style="left:0;top:0" width="1151" height="990"><defs><pattern id="bp5" width="4" height="4" patternUnits="userSpaceOnUse"><rect x="0" y="1" width="1" height="1" fill="#1e2a3a"/><rect x="2" y="3" width="1" height="1" fill="#1e2a3a"/><rect x="3" y="0" width="1" height="1" fill="#ffffff"/><rect x="1" y="2" width="1" height="1" fill="#ffffff"/></pattern></defs><rect x="562" y="124" width="111" height="6" fill="url(#bp5)"/></svg>
<svg class="a" style="left:675px;top:123px" width="9" height="9" viewBox="0 0 9 9"><path d="M1.5 1.5 L7.5 7.5 M7.5 1.5 L1.5 7.5" stroke="#3a66c0" stroke-width="2"/></svg>
<div class="a" style="left:558px;top:132px;width:129px;height:1px;background:#6382bf"></div>
<div class="a" style="left:558px;top:133px;width:129px;height:24px;background:linear-gradient(#ffffff,#e6e6e6)"></div>
<div class="a" style="left:558px;top:157px;width:129px;height:1px;background:#c9c9c9"></div>
<svg class="a" style="left:563px;top:135px" width="18" height="18" viewBox="0 0 18 18"><rect x="2.5" y="2.5" width="15" height="15" fill="#e8f0fa" stroke="#6a98d8" stroke-width="1"/><rect x="4" y="4" width="12" height="2" fill="#9fd89f"/><path d="M4 8.5 H16 M4 11.5 H16 M4 14.5 H16 M8 7 V16.5 M12 7 V16.5" stroke="#b4cae8" stroke-width="1"/><rect x="0.5" y="0.5" width="8" height="9.5" rx="3" fill="#ececec" stroke="#9a9a9a" stroke-width="1"/><path d="M3.5 3 V8" stroke="#c4c4c4" stroke-width="1.5"/></svg>
<div class="t" style="left:586.0px;top:138px;font-size:13px;line-height:13px;letter-spacing:0.689px;color:#222;transform:scaleX(1.100);transform-origin:0 0;font-weight:bold;">hpr_hpr.tags</div>
<div class="a" style="left:563px;top:161px;width:13px;height:13px;border:1px solid #7f8f9f;box-sizing:border-box;background:linear-gradient(#f4f7fb,#c6d6ea)"></div>
<div class="t" style="left:581.0px;top:161px;font-size:13px;line-height:13px;letter-spacing:2.417px;color:#333;">id</div>
<div class="a" style="left:563px;top:180px;width:13px;height:13px;border:1px solid #7f8f9f;box-sizing:border-box;background:linear-gradient(#f4f7fb,#c6d6ea)"></div>
<div class="t" style="left:581.0px;top:180px;font-size:13px;line-height:13px;letter-spacing:1.799px;color:#333;">tag</div>
<svg class="a" style="left:607px;top:180px" width="15" height="12" viewBox="0 0 15 12"><path d="M0.5 0.5 L14.5 0.5 L9 6 L7.5 11.5 L6 6 Z" fill="#2fa84a"/><rect x="0" y="0" width="15" height="1.2" fill="#8aa08a"/></svg>
<div class="a" style="left:563px;top:199px;width:13px;height:13px;border:1px solid #7f8f9f;box-sizing:border-box;background:linear-gradient(#f4f7fb,#c6d6ea)"></div>
<div class="t" style="left:581.0px;top:199px;font-size:13px;line-height:13px;letter-spacing:1.149px;color:#333;">lctag</div>
<svg class="a" style="left:945px;top:584px" width="18" height="24" viewBox="0 0 18 24"><path d="M3.5 2 L14.5 13 L11.5 16 L11.5 21 L8 18 L3.5 18 Z" fill="#c8c8c8" transform="translate(0.8,0.8)"/><path d="M3 2 L14 13 L11 16 L11 21 L7.5 18 L3 18 Z" fill="#4a4a4a" stroke="#ffffff" stroke-width="0.9" stroke-linejoin="miter"/></svg>
<svg class="a" style="left:7px;top:678px" width="170" height="22" viewBox="0 0 170 22"><path d="M4.5 0.5 L4.5 16 L9 20.5 L89.5 20.5 L89.5 0.5" fill="#b8cfe5" stroke="#6382bf" stroke-width="1"/><path d="M6 1 L6 15.5 L10 19.5" fill="none" stroke="#fff" stroke-width="1"/><path d="M89.5 0.5 L89.5 7 L94 20.5 L158.5 20.5 L158.5 0.5" fill="#eeeeee" stroke="#7a8a99" stroke-width="1"/><path d="M89.5 14 L95.5 20" fill="none" stroke="#7a8a99" stroke-width="1"/></svg>
<div class="a" style="left:90px;top:679px;width:6px;height:5px;background:#b8cfe5"></div>
<div class="a" style="left:7px;top:678px;width:1137px;height:1px;background:#6382bf"></div>
<svg class="a" style="left:0;top:0" width="1151" height="990"><defs><pattern id="bp6" width="4" height="4" patternUnits="userSpaceOnUse"><rect x="2" y="0" width="1" height="1" fill="#6a6a6a"/><rect x="0" y="2" width="1" height="1" fill="#6a6a6a"/><rect x="3" y="1" width="1" height="1" fill="#ffffff"/><rect x="1" y="3" width="1" height="1" fill="#ffffff"/></pattern></defs><rect x="34" y="703" width="1108" height="5" fill="url(#bp6)"/></svg>
<div class="t" style="left:19.5px;top:684px;font-size:12.5px;line-height:12.5px;letter-spacing:0.968px;color:#222;transform:scaleX(1.100);transform-origin:0 0;font-weight:bold;">Designer</div>
<div class="t" style="left:107.6px;top:684px;font-size:12.5px;line-height:12.5px;letter-spacing:0.745px;color:#222;transform:scaleX(1.100);transform-origin:0 0;font-weight:bold;">Syntax</div>
<div class="a" style="left:7px;top:708px;width:1137px;height:38px;background:linear-gradient(#fbfbfb 0%,#efefef 45%,#dadada 100%)"></div>
<div class="a" style="left:7px;top:746px;width:1137px;height:1px;background:#e4e4e4"></div>
<div class="a" style="left:9px;top:710px;width:33px;height:33px;border:1px solid #767676;box-sizing:border-box;background:linear-gradient(#f2f2f2,#ebebeb);box-shadow:inset 1px 1px 0 #fff"></div>
<svg class="a" style="left:9px;top:710px" width="33" height="33" viewBox="0 0 33 33"><defs></defs><defs><linearGradient id="gcyl2" x1="0" x2="1"><stop offset="0" stop-color="#bdbdbd"/><stop offset="0.35" stop-color="#f6f6f6"/><stop offset="0.8" stop-color="#d0d0d0"/><stop offset="1" stop-color="#a0a0a0"/></linearGradient></defs><path d="M4.5 8 Q4.5 4.5 13 4.5 Q21.5 4.5 21.5 8 L21.5 24 Q21.5 27.5 13 27.5 Q4.5 27.5 4.5 24 Z" fill="url(#gcyl2)" stroke="#a8a8a8" stroke-width="1"/><ellipse cx="13" cy="8" rx="8" ry="2.6" fill="#f4f4f4" stroke="#b8b8b8" stroke-width="0.8"/><path d="M13.5 15.5 L28 15.5 L30 17.5 L30 30.5 L13.5 30.5 Z" fill="#5e8fd6" stroke="#2f62b8" stroke-width="1.2"/><rect x="16" y="16.5" width="10.5" height="5" fill="#f2f6fb"/><rect x="17.5" y="17" width="1.5" height="3.5" fill="#4a7cc8"/><rect x="16" y="24.5" width="10.5" height="5.5" fill="#fff"/><rect x="17" y="26" width="8.5" height="2.2" fill="#8cc84a"/></svg>
<div class="a" style="left:43px;top:710px;width:33px;height:33px;border:1px solid #b9b9b9;box-sizing:border-box;background:linear-gradient(#f2f2f2,#ebebeb);box-shadow:inset 1px 1px 0 #fff"></div>
<svg class="a" style="left:43px;top:710px" width="33" height="33" viewBox="0 0 33 33"><defs></defs><path d="M12 5 L21 5 L27.5 11.5 L27.5 21.5 L21 28 L12 28 L5.5 21.5 L5.5 11.5 Z" fill="#cfcfcf"/></svg>
<div class="a" style="left:87px;top:710px;width:33px;height:33px;border:1px solid #767676;box-sizing:border-box;background:linear-gradient(#f2f2f2,#ebebeb);box-shadow:inset 1px 1px 0 #fff"></div>
<svg class="a" style="left:87px;top:710px" width="33" height="33" viewBox="0 0 33 33"><defs></defs><rect x="4.5" y="5.5" width="21" height="22" fill="#eef4fb" stroke="#4a80d0" stroke-width="1.5"/><rect x="7" y="8" width="16" height="2" fill="#8cd08c"/><path d="M7 13 H23 M7 17 H23 M7 21 H23 M12 11 V25 M17.5 11 V25" stroke="#9cb8e0" stroke-width="1"/><path d="M9 21 L14 17 L14 19.5 L29 19.5 L29 22.5 L14 22.5 L14 25 Z" fill="#2e8f36"/></svg>
<div class="a" style="left:121px;top:710px;width:33px;height:33px;border:1px solid #767676;box-sizing:border-box;background:linear-gradient(#f2f2f2,#ebebeb);box-shadow:inset 1px 1px 0 #fff"></div>
<svg class="a" style="left:121px;top:710px" width="33" height="33" viewBox="0 0 33 33"><defs></defs><rect x="4.5" y="5.5" width="21" height="22" fill="#eef4fb" stroke="#4a80d0" stroke-width="1.5"/><rect x="7" y="8" width="16" height="2" fill="#8cd08c"/><path d="M7 13 H23 M7 17 H23 M7 21 H23 M12 11 V25 M17.5 11 V25" stroke="#9cb8e0" stroke-width="1"/><path d="M6 19.5 L23 19.5 L23 17 L29 21 L23 25 L23 22.5 L6 22.5 Z" fill="#e83838"/></svg>
<div class="a" style="left:165px;top:710px;width:33px;height:33px;border:1px solid #767676;box-sizing:border-box;background:linear-gradient(#f2f2f2,#ebebeb);box-shadow:inset 1px 1px 0 #fff"></div>
<svg class="a" style="left:165px;top:710px" width="33" height="33" viewBox="0 0 33 33"><defs></defs><path d="M5.5 9 L27.5 9 L18.5 18 L16.5 26 L14.5 18 Z" fill="#e9edf1" stroke="#8898a8" stroke-width="1.2"/><path d="M8 10 L25 10 L17 17 Z" fill="#c9d2dc"/></svg>
<div class="a" style="left:199px;top:710px;width:33px;height:33px;border:1px solid #767676;box-sizing:border-box;background:linear-gradient(#f2f2f2,#ebebeb);box-shadow:inset 1px 1px 0 #fff"></div>
<svg class="a" style="left:199px;top:710px" width="33" height="33" viewBox="0 0 33 33"><defs></defs><rect x="8" y="8" width="6" height="7" fill="#5a6470"/><rect x="19" y="8" width="6" height="7" fill="#5a6470"/><rect x="5" y="14" width="10" height="13" fill="#3f4852"/><rect x="18" y="14" width="10" height="13" fill="#3f4852"/><rect x="14" y="15" width="5" height="6" fill="#6a7480"/><rect x="6.5" y="17" width="7" height="3" fill="#9aa4ae"/><rect x="19.5" y="17" width="7" height="3" fill="#9aa4ae"/></svg>
<div class="a" style="left:243px;top:710px;width:33px;height:33px;border:1px solid #767676;box-sizing:border-box;background:linear-gradient(#f2f2f2,#ebebeb);box-shadow:inset 1px 1px 0 #fff"></div>
<svg class="a" style="left:243px;top:710px" width="33" height="33" viewBox="0 0 33 33"><defs></defs><circle cx="16.5" cy="17" r="11.5" fill="#4aaa4a" stroke="#2f8a2f" stroke-width="1"/><circle cx="16.5" cy="17" r="8.5" fill="#5cbc5c"/><path d="M11 17 L15 21 L22 13" fill="none" stroke="#fff" stroke-width="3"/></svg>
<div class="a" style="left:277px;top:710px;width:33px;height:33px;border:1px solid #767676;box-sizing:border-box;background:linear-gradient(#f2f2f2,#ebebeb);box-shadow:inset 1px 1px 0 #fff"></div>
<svg class="a" style="left:277px;top:710px" width="33" height="33" viewBox="0 0 33 33"><defs></defs><path d="M8 9 L25 26 M25 9 L8 26" stroke="#f04040" stroke-width="5" stroke-linecap="round"/></svg>
<div class="a" style="left:321px;top:710px;width:33px;height:33px;border:1px solid #767676;box-sizing:border-box;background:linear-gradient(#f2f2f2,#ebebeb);box-shadow:inset 1px 1px 0 #fff"></div>
<svg class="a" style="left:321px;top:710px" width="33" height="33" viewBox="0 0 33 33"><defs></defs><defs><linearGradient id="gxl" x1="0" x2="1"><stop offset="0" stop-color="#1f7a1f"/><stop offset="0.5" stop-color="#8fd88a"/><stop offset="1" stop-color="#3aa03a"/></linearGradient><linearGradient id="gxt" x1="0" y1="0" x2="0" y2="1"><stop offset="0" stop-color="#2f8f2f"/><stop offset="0.5" stop-color="#9ad890"/><stop offset="1" stop-color="#2a8a2a"/></linearGradient></defs><path d="M4 30 L4 9 Q4 4 9 4 L27 4 L27 10.5 L12 10.5 L12 30 Z" fill="url(#gxt)"/><path d="M4 30 L4 9 Q4 6 6 5 L12 10.5 L12 30 Z" fill="url(#gxl)"/><path d="M15.5 14 L23 21.5 M22 14 L16 21" stroke="#2a8a2a" stroke-width="2.6"/><rect x="25.5" y="14" width="3" height="2.5" fill="#6cc06c"/><rect x="25.5" y="19" width="3" height="2.5" fill="#6cc06c"/><rect x="25.5" y="24" width="3" height="2.5" fill="#6cc06c"/><rect x="15" y="24.5" width="4.5" height="3" fill="#7cc87c"/><rect x="21" y="24" width="2.5" height="2.5" fill="#6cc06c"/></svg>
<div class="a" style="left:365px;top:710px;width:33px;height:33px;border:1px solid #767676;box-sizing:border-box;background:linear-gradient(#f2f2f2,#ebebeb);box-shadow:inset 1px 1px 0 #fff"></div>
<svg class="a" style="left:365px;top:710px" width="33" height="33" viewBox="0 0 33 33"><defs></defs><rect x="5.5" y="5.5" width="22" height="22" fill="#e6eef8" stroke="#4a80d0" stroke-width="1.5"/><rect x="8" y="8" width="17" height="4" fill="#9cc0ec"/><rect x="8" y="14" width="4.5" height="11" fill="#3f78c8"/><rect x="14.5" y="14" width="10.5" height="11" fill="#eef3fa" stroke="#c8d6e8" stroke-width="0.6"/></svg>
<div class="a" style="left:9px;top:749px;width:1133px;height:205px;border:1px solid #6e6e6e;box-sizing:border-box;background:#fff"></div>
<div class="a" style="left:10px;top:750px;width:1121px;height:20px;background:#eeeeee;box-shadow:inset 0 1px 0 #fff"></div>
<div class="a" style="left:10px;top:770px;width:50px;height:183px;background:#eeeeee"></div>
<div class="a" style="left:10px;top:770px;width:1121px;height:1px;background:#7a8a99"></div>
<div class="a" style="left:10px;top:788px;width:1121px;height:1px;background:#7a8a99"></div>
<div class="a" style="left:10px;top:806px;width:1121px;height:1px;background:#7a8a99"></div>
<div class="a" style="left:10px;top:824px;width:1121px;height:1px;background:#7a8a99"></div>
<div class="a" style="left:10px;top:842px;width:1121px;height:1px;background:#7a8a99"></div>
<div class="a" style="left:10px;top:860px;width:1121px;height:1px;background:#7a8a99"></div>
<div class="a" style="left:10px;top:878px;width:1121px;height:1px;background:#7a8a99"></div>
<div class="a" style="left:10px;top:896px;width:1121px;height:1px;background:#7a8a99"></div>
<div class="a" style="left:10px;top:914px;width:1121px;height:1px;background:#7a8a99"></div>
<div class="a" style="left:10px;top:932px;width:1121px;height:1px;background:#7a8a99"></div>
<div class="a" style="left:59px;top:750px;width:1px;height:183px;background:#7a8a99"></div>
<div class="a" style="left:106px;top:750px;width:1px;height:183px;background:#7a8a99"></div>
<div class="a" style="left:205px;top:750px;width:1px;height:183px;background:#7a8a99"></div>
<div class="a" style="left:680px;top:750px;width:1px;height:183px;background:#7a8a99"></div>
<div class="a" style="left:1130px;top:750px;width:1px;height:183px;background:#7a8a99"></div>
<div class="a" style="left:10px;top:751px;width:1px;height:19px;background:#fff"></div>
<div class="a" style="left:60px;top:751px;width:1px;height:19px;background:#fff"></div>
<div class="a" style="left:107px;top:751px;width:1px;height:19px;background:#fff"></div>
<div class="a" style="left:206px;top:751px;width:1px;height:19px;background:#fff"></div>
<div class="a" style="left:681px;top:751px;width:1px;height:19px;background:#fff"></div>
<div class="t" style="left:30.7px;top:754px;font-size:13.5px;line-height:13.5px;letter-spacing:3.855px;color:#333;transform:scaleX(1.100);transform-origin:0 0;font-weight:bold;">#</div>
<div class="t" style="left:76.4px;top:754px;font-size:13.5px;line-height:13.5px;letter-spacing:2.104px;color:#333;transform:scaleX(1.100);transform-origin:0 0;font-weight:bold;">id</div>
<div class="t" style="left:142.4px;top:754px;font-size:13.5px;line-height:13.5px;letter-spacing:1.810px;color:#333;">date</div>
<div class="t" style="left:430.9px;top:754px;font-size:13.5px;line-height:13.5px;letter-spacing:1.660px;color:#333;">title</div>
<div class="t" style="left:891.4px;top:754px;font-size:13.5px;line-height:13.5px;letter-spacing:1.629px;color:#333;">tags</div>
<div class="t" style="left:29.8px;top:772px;font-size:14px;line-height:14px;letter-spacing:1.855px;color:#333;transform:scaleX(1.100);transform-origin:0 0;font-weight:bold;">1</div>
<div class="t" style="left:96.5px;top:772px;font-size:14px;line-height:14px;letter-spacing:2.678px;color:#333;">1</div>
<div class="t" style="left:108.6px;top:772px;font-size:14px;line-height:14px;letter-spacing:1.096px;color:#333;">2007-12-31</div>
<div class="t" style="left:206.5px;top:772px;font-size:14px;line-height:14px;letter-spacing:0.677px;color:#333;">Introduction to HPR</div>
<div class="t" style="left:681.4px;top:772px;font-size:14px;line-height:14px;letter-spacing:0.922px;color:#333;">hpr, twat, community</div>
<div class="t" style="left:30.2px;top:790px;font-size:14px;line-height:14px;letter-spacing:2.013px;color:#333;">2</div>
<div class="t" style="left:78.7px;top:790px;font-size:14px;line-height:14px;letter-spacing:1.860px;color:#333;">947</div>
<div class="t" style="left:108.6px;top:790px;font-size:14px;line-height:14px;letter-spacing:1.096px;color:#333;">2012-03-20</div>
<div class="t" style="left:206.5px;top:790px;font-size:14px;line-height:14px;letter-spacing:0.550px;color:#333;">Presentation by Jared Smith at the Columbia Area Linux Users Group</div>
<div class="t" style="left:681.4px;top:790px;font-size:14px;line-height:14px;letter-spacing:0.905px;color:#333;">Fedora,community</div>
<div class="t" style="left:30.2px;top:808px;font-size:14px;line-height:14px;letter-spacing:2.013px;color:#333;">3</div>
<div class="t" style="left:69.6px;top:808px;font-size:14px;line-height:14px;letter-spacing:1.707px;color:#333;">1000</div>
<div class="t" style="left:108.6px;top:808px;font-size:14px;line-height:14px;letter-spacing:1.096px;color:#333;">2012-05-31</div>
<div class="t" style="left:206.5px;top:808px;font-size:14px;line-height:14px;letter-spacing:1.020px;color:#333;">Episode 1000</div>
<div class="t" style="left:681.4px;top:808px;font-size:14px;line-height:14px;letter-spacing:0.788px;color:#333;">HPR,community,congratulations</div>
<div class="t" style="left:30.2px;top:826px;font-size:14px;line-height:14px;letter-spacing:2.013px;color:#333;">4</div>
<div class="t" style="left:69.6px;top:826px;font-size:14px;line-height:14px;letter-spacing:1.707px;color:#333;">1024</div>
<div class="t" style="left:108.6px;top:826px;font-size:14px;line-height:14px;letter-spacing:1.096px;color:#333;">2012-07-05</div>
<div class="t" style="left:206.5px;top:826px;font-size:14px;line-height:14px;letter-spacing:1.020px;color:#333;">Episode 1024</div>
<div class="t" style="left:681.4px;top:826px;font-size:14px;line-height:14px;letter-spacing:0.675px;color:#333;">HPR,community,anniversary</div>
<div class="t" style="left:30.2px;top:844px;font-size:14px;line-height:14px;letter-spacing:2.013px;color:#333;">5</div>
<div class="t" style="left:69.6px;top:844px;font-size:14px;line-height:14px;letter-spacing:1.707px;color:#333;">1509</div>
<div class="t" style="left:108.6px;top:844px;font-size:14px;line-height:14px;letter-spacing:1.096px;color:#333;">2014-05-15</div>
<div class="t" style="left:206.5px;top:844px;font-size:14px;line-height:14px;letter-spacing:0.640px;color:#333;">HPR Needs Shows</div>
<div class="t" style="left:681.4px;top:844px;font-size:14px;line-height:14px;letter-spacing:0.732px;color:#333;">HPR, shows, request, call to action, community, contribute</div>
<div class="t" style="left:30.2px;top:862px;font-size:14px;line-height:14px;letter-spacing:2.013px;color:#333;">6</div>
<div class="t" style="left:69.6px;top:862px;font-size:14px;line-height:14px;letter-spacing:1.707px;color:#333;">1913</div>
<div class="t" style="left:108.6px;top:862px;font-size:14px;line-height:14px;letter-spacing:1.096px;color:#333;">2015-12-02</div>
<div class="t" style="left:206.5px;top:862px;font-size:14px;line-height:14px;letter-spacing:0.694px;color:#333;">The Linux Experiment</div>
<div class="t" style="left:681.4px;top:862px;font-size:14px;line-height:14px;letter-spacing:0.749px;color:#333;">linux, the linux experiment, community</div>
<div class="t" style="left:30.2px;top:880px;font-size:14px;line-height:14px;letter-spacing:2.013px;color:#333;">7</div>
<div class="t" style="left:69.6px;top:880px;font-size:14px;line-height:14px;letter-spacing:1.707px;color:#333;">2008</div>
<div class="t" style="left:108.6px;top:880px;font-size:14px;line-height:14px;letter-spacing:1.096px;color:#333;">2016-04-13</div>
<div class="t" style="left:206.5px;top:880px;font-size:14px;line-height:14px;letter-spacing:0.702px;color:#333;">HPR needs shows to survive.</div>
<div class="t" style="left:681.4px;top:880px;font-size:14px;line-height:14px;letter-spacing:0.766px;color:#333;">HPR,community,shows,call to action,contribute</div>
<div class="t" style="left:30.2px;top:898px;font-size:14px;line-height:14px;letter-spacing:2.013px;color:#333;">8</div>
<div class="t" style="left:69.6px;top:898px;font-size:14px;line-height:14px;letter-spacing:1.707px;color:#333;">2035</div>
<div class="t" style="left:108.6px;top:898px;font-size:14px;line-height:14px;letter-spacing:1.096px;color:#333;">2016-05-20</div>
<div class="t" style="left:206.5px;top:898px;font-size:14px;line-height:14px;letter-spacing:0.832px;color:#333;">Building Community</div>
<div class="t" style="left:681.4px;top:898px;font-size:14px;line-height:14px;letter-spacing:1.235px;color:#333;">community</div>
<div class="t" style="left:30.2px;top:916px;font-size:14px;line-height:14px;letter-spacing:2.013px;color:#333;">9</div>
<div class="t" style="left:69.6px;top:916px;font-size:14px;line-height:14px;letter-spacing:1.707px;color:#333;">2077</div>
<div class="t" style="left:108.6px;top:916px;font-size:14px;line-height:14px;letter-spacing:1.096px;color:#333;">2016-07-19</div>
<div class="t" style="left:206.5px;top:916px;font-size:14px;line-height:14px;letter-spacing:0.629px;color:#333;">libernil.net and self hosting for friends and family</div>
<div class="t" style="left:681.4px;top:916px;font-size:14px;line-height:14px;letter-spacing:0.770px;color:#333;">gnu, linux, networking, community, servers, services, commons</div>
<div class="a" style="left:9px;top:956px;width:1021px;height:25px;border:1px solid #7a7a7a;box-sizing:border-box;background:#eeeeee;box-shadow:inset 1px 1px 0 #fff"></div>
<div class="t" style="left:14.4px;top:962px;font-size:13px;line-height:13px;letter-spacing:0.788px;color:#222;transform:scaleX(1.100);transform-origin:0 0;font-weight:bold;">record 1 ... 9 / 9  | changes 0</div>
<div class="a" style="left:1032px;top:956px;width:110px;height:25px;border:1px solid #7a8a99;box-sizing:border-box;background:linear-gradient(#f6f9fc,#c7d8ec)"></div>
<div class="t" style="left:1036.7px;top:962px;font-size:13px;line-height:13px;letter-spacing:0.501px;color:#222;transform:scaleX(1.100);transform-origin:0 0;font-weight:bold;">count records</div>
<div class="a" style="left:1px;top:988px;width:1149px;height:1px;background:#fafafa"></div>
<div class="a" style="left:1149px;top:19px;width:1px;height:970px;background:#f6f6f6"></div>
<div class="a" style="left:0px;top:0px;width:1151px;height:1px;background:#333"></div>
<div class="a" style="left:0px;top:0px;width:1px;height:990px;background:#333"></div>
<div class="a" style="left:1150px;top:0px;width:1px;height:990px;background:#333"></div>
<div class="a" style="left:0px;top:989px;width:1151px;height:1px;background:#333"></div>
</body></html>
